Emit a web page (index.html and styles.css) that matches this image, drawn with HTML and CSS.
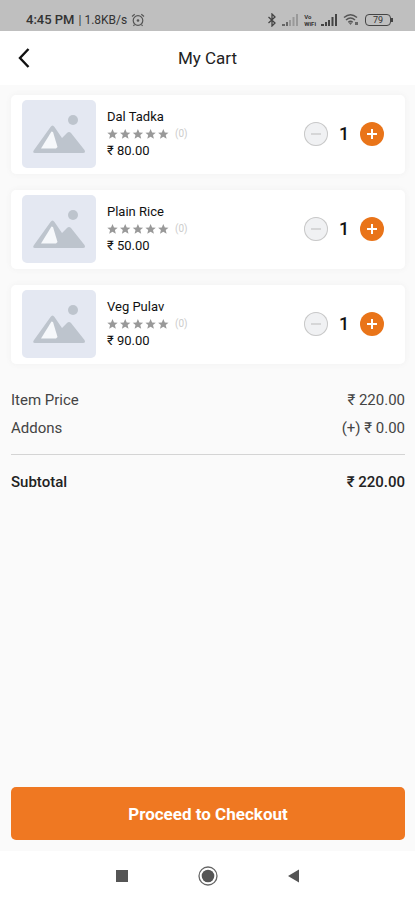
FILE: index.html
```html
<!DOCTYPE html>
<html lang="en">
<head>
<meta charset="utf-8">
<meta name="viewport" content="width=device-width, initial-scale=1">
<title>My Cart</title>
<link rel="stylesheet" href="styles.css">
</head>
<body>
<svg class="sprite" aria-hidden="true">
  <symbol id="photo" viewBox="0 0 74 68">
    <circle cx="51" cy="20" r="5"/>
    <path d="M13 53Q10 53 12 50L28.500 27Q30.500 24 32.500 27L40 38L45 33Q47 31 49 33L62.500 50Q64 53 61 53Z"/>
    <path class="snow" d="M19 48.500L29.500 31.500L31 32L35.500 47L34 48.500Z"/>
  </symbol>
  <symbol id="stars" viewBox="0 0 62 12">
    <path id="star" d="M5.500 1L7 4.400L10.700 4.700L7.900 7.100L8.800 10.700L5.500 8.800L2.200 10.700L3.100 7.100L.3 4.700L4 4.400Z"/>
    <use href="#star" x="12.700"/><use href="#star" x="25.400"/><use href="#star" x="38.100"/><use href="#star" x="50.800"/>
  </symbol>
</svg>
<div class="app">
  <div class="status">
    <div class="status-group">
      <span class="clock">4:45 PM</span><span class="speed">| 1.8KB/s</span>
      <svg class="alarm" viewBox="0 0 14 14" width="14" height="14"><g fill="none" stroke="#555" stroke-width="1.200"><circle cx="7" cy="7.500" r="4.800"/><path d="M1 3.500L3.700 1.300M13 3.500L10.300 1.300M3.500 11.500L2.500 13M10.500 11.500L11.500 13"/></g><circle cx="7" cy="7.500" r="1.300" fill="#555"/></svg>
    </div>
    <div class="status-group status-icons">
      <svg viewBox="0 0 10 14" width="10" height="14"><path d="M1.500 4L8 10L5 13V1L8 4L1.500 10" fill="none" stroke="#444" stroke-width="1.300"/></svg>
      <svg viewBox="0 0 17 12" width="17" height="12"><path d="M0 12V10H3V12ZM4 12V8H6V12Z" fill="#666"/><path d="M7 12V6H9V12ZM10.500 12V3H12.500V12ZM14 12V0H16V12Z" fill="#999"/></svg>
      <span class="volte"><span>Vo</span><span>WiFi</span></span>
      <svg viewBox="0 0 17 12" width="17" height="12"><path d="M0 12V10H3V12ZM4 12V8H6V12ZM7 12V6H9V12ZM10.500 12V3H12.500V12ZM14 12V0H16V12Z" fill="#444"/></svg>
      <svg class="wifi" viewBox="0 0 16 13" width="16" height="13"><path d="M1 4.500Q7.500-1 14 4.500M3 7Q7.500 3 12 7M5.300 9.200Q7.500 7.300 9.700 9.200" fill="none" stroke="#555" stroke-width="1.500"/><path d="M5.500 9.500H9.500L7.500 12ZM12 9H15V12H12Z" fill="#666"/></svg>
      <span class="battery">79</span>
    </div>
  </div>
  <header class="header">
    <button class="back" aria-label="Back"><svg viewBox="0 0 12 20" width="12" height="20"><path d="M10.500 1L2 10L10.500 19" fill="none" stroke="#111" stroke-width="2.400"/></svg></button>
    <h1>My Cart</h1>
  </header>
  <main class="content">
    <ul class="cart">
      <li class="card">
        <svg class="thumb" aria-hidden="true"><use href="#photo"/></svg>
        <div class="details"><h2>Dal Tadka</h2><div class="rating"><svg class="stars" aria-hidden="true"><use href="#stars"/></svg><span>(0)</span></div><p>₹ 80.00</p></div>
        <div class="stepper">
          <button class="minus" aria-label="Remove one Dal Tadka"><svg viewBox="0 0 12 12" width="12" height="12"><path d="M1 6H11"/></svg></button>
          <output>1</output>
          <button class="plus" aria-label="Add one Dal Tadka"><svg viewBox="0 0 12 12" width="12" height="12"><path d="M1 6H11M6 1V11"/></svg></button>
        </div>
      </li>
      <li class="card">
        <svg class="thumb" aria-hidden="true"><use href="#photo"/></svg>
        <div class="details"><h2>Plain Rice</h2><div class="rating"><svg class="stars" aria-hidden="true"><use href="#stars"/></svg><span>(0)</span></div><p>₹ 50.00</p></div>
        <div class="stepper">
          <button class="minus" aria-label="Remove one Plain Rice"><svg viewBox="0 0 12 12" width="12" height="12"><path d="M1 6H11"/></svg></button>
          <output>1</output>
          <button class="plus" aria-label="Add one Plain Rice"><svg viewBox="0 0 12 12" width="12" height="12"><path d="M1 6H11M6 1V11"/></svg></button>
        </div>
      </li>
      <li class="card">
        <svg class="thumb" aria-hidden="true"><use href="#photo"/></svg>
        <div class="details"><h2>Veg Pulav</h2><div class="rating"><svg class="stars" aria-hidden="true"><use href="#stars"/></svg><span>(0)</span></div><p>₹ 90.00</p></div>
        <div class="stepper">
          <button class="minus" aria-label="Remove one Veg Pulav"><svg viewBox="0 0 12 12" width="12" height="12"><path d="M1 6H11"/></svg></button>
          <output>1</output>
          <button class="plus" aria-label="Add one Veg Pulav"><svg viewBox="0 0 12 12" width="12" height="12"><path d="M1 6H11M6 1V11"/></svg></button>
        </div>
      </li>
    </ul>
    <dl class="totals">
      <div class="row"><dt>Item Price</dt><dd>₹ 220.00</dd></div>
      <div class="row"><dt>Addons</dt><dd>(+) ₹ 0.00</dd></div>
      <div class="row subtotal"><dt>Subtotal</dt><dd>₹ 220.00</dd></div>
    </dl>
    <button class="checkout">Proceed to Checkout</button>
  </main>
  <nav class="system-nav" aria-label="System">
    <button aria-label="Recent apps"><svg viewBox="0 0 20 20" width="20" height="20"><path d="M4 4H16V16H4Z" fill="#555"/></svg></button>
    <button aria-label="Home"><svg viewBox="0 0 20 20" width="20" height="20"><circle cx="10" cy="10" r="9" fill="none" stroke="#666" stroke-width="1.300"/><circle cx="10" cy="10" r="6.300" fill="#555"/></svg></button>
    <button aria-label="Back"><svg viewBox="0 0 20 20" width="20" height="20"><path d="M4 10L15 3.500V16.500Z" fill="#555"/></svg></button>
  </nav>
</div>
</body>
</html>
```
FILE: styles.css
```css
* { box-sizing: border-box; }
body, h1, h2, p, ul, dl, dd { margin: 0; padding: 0; }
body { font-family: Roboto, "Noto Sans", sans-serif; color: #222; background: #fafafa; }
button { border: 0; padding: 0; background: none; font: inherit; cursor: pointer; }
svg { display: block; flex: none; }
.sprite { position: absolute; width: 0; height: 0; }
.app { min-height: 100vh; display: flex; flex-direction: column; }

.status {
  display: flex; justify-content: space-between; align-items: center;
  height: 31px; padding: 8px 24px 0 26px; background: #bfbfbf; color: #333;
}
.status-group { display: flex; align-items: center; gap: 4px; }
.clock { font-size: 13px; font-weight: 500; }
.speed { font-size: 12px; }
.status-icons { gap: 5px; }
.volte { display: flex; flex-direction: column; font-size: 6px; line-height: 7px; font-weight: 700; }
.battery {
  position: relative; width: 26px; height: 12px; margin-left: 1px;
  border: 1px solid #444; border-radius: 4px;
  font-size: 9px; line-height: 10px; text-align: center;
}
.battery::after {
  content: ""; position: absolute; right: -3px; top: 3px;
  width: 2px; height: 4px; background: #444;
}

.header {
  display: grid; grid-template-columns: 48px 1fr 48px; align-items: center;
  height: 54px; background: #fff;
}
.header h1 { font-size: 17px; font-weight: 400; text-align: center; color: #222; }
.back { height: 48px; display: grid; place-items: center; }

.content { flex: 1; display: flex; flex-direction: column; padding: 10px 10px 11px 11px; }
.cart { list-style: none; display: grid; gap: 16px; }
.card {
  display: flex; align-items: center; min-height: 79px; padding: 5px 21px 6px 11px;
  background: #fff; border-radius: 5px; box-shadow: 0 0 5px 1px #f3f3f3;
}
.thumb { width: 74px; height: 68px; border-radius: 5px; background: #e4e8f2; fill: #bdc4cd; }
.snow { fill: #f6f8fb; }
.details { flex: 1; padding-left: 11px; }
.details h2, .details p { font-size: 13px; line-height: 18px; font-weight: 400; color: #111; }
.rating { display: flex; align-items: center; gap: 6px; height: 16px; }
.stars { width: 62px; height: 12px; fill: #999; }
.rating span { font-size: 10px; line-height: 16px; color: #ccc; }
.stepper { display: flex; align-items: center; }
.stepper output { width: 32px; text-align: center; font-size: 18px; line-height: 24px; font-weight: 500; color: #111; }
.stepper button { display: grid; place-items: center; width: 24px; height: 24px; border-radius: 50%; }
.minus { background: #f0f1f3; box-shadow: inset 0 0 0 1px #c8c8c8; }
.minus svg { stroke: #bbb; }
.plus { background: #e97419; }
.plus svg { stroke: #fff; stroke-width: 2; }

.totals { padding-top: 22px; }
.row { display: flex; justify-content: space-between; font-size: 15px; line-height: 28px; color: #444; }
.subtotal { margin-top: 12px; padding-top: 13px; border-top: 1px solid #d4d4d4; color: #222; font-weight: 500; }
.checkout {
  margin-top: auto; min-height: 53px; border-radius: 5px;
  background: #ef7822; color: #fff; font-size: 17px; font-weight: 700;
}

.system-nav { display: flex; align-items: center; justify-content: center; gap: 66px; height: 49px; background: #fff; }
.system-nav button { width: 20px; height: 20px; }
```
